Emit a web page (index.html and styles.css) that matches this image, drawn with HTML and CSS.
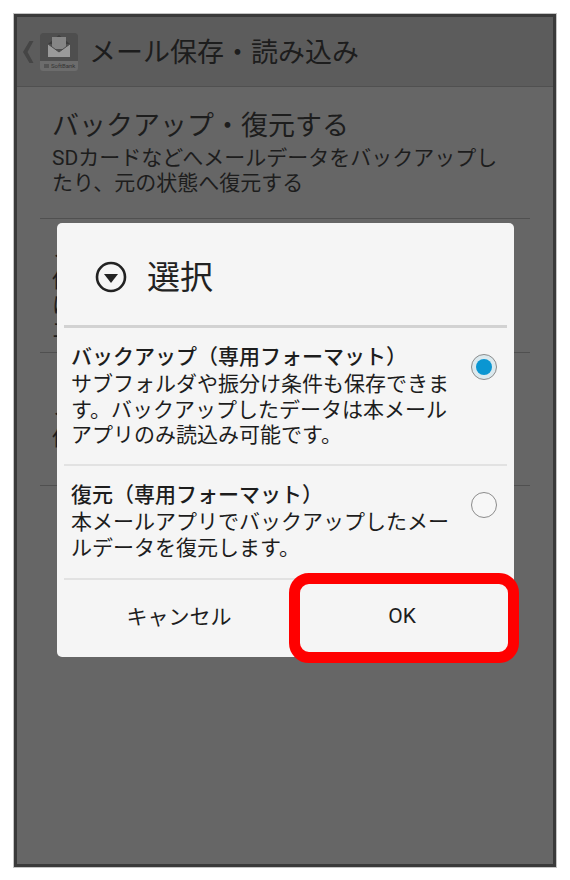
FILE: index.html
```html
<!DOCTYPE html>
<html>
<head>
<meta charset="utf-8"/>
<link rel="icon" href="data:,">
<link rel="stylesheet" href="styles.css">
<title>メール保存・読み込み</title>
</head>

<body>
<div class="phone">
  <div class="topbar">
    <span class="back"><svg width="12" height="22" viewBox="0 0 12 22"><path d="M7.5 0 H11.5 L5.5 11 L11.5 22 H7.5 L1 11 Z" fill="#454545"/></svg></span>
    <span class="appicon">
      <svg width="38" height="38" viewBox="0 0 38 38">
        <rect x="0" y="0" width="38" height="38" rx="3" fill="#6c6c6c"/>
        <path d="M0 3 Q0 0 3 0 H35 Q38 0 38 3 V28 H0 Z" fill="#4e4e4e"/>
        <path d="M8 11 L19 2 L30 11 Z" fill="#3c3c3c"/>
        <rect x="12" y="4" width="14" height="12" fill="#858585"/>
        <path d="M8 11 L19 19 L30 11 V24 H8 Z" fill="#9a9a9a"/>
        <path d="M8 11 L19 19 L30 11" fill="none" stroke="#4b4b4b" stroke-width="1"/>
        <path d="M4 32 H9 M4 34 H9" stroke="#3c3c3c" stroke-width="1"/>
      </svg>
      <span class="softbank">SoftBank</span>
    </span>
    <span class="toptitle">メール保存・読み込み</span>
  </div>

  <div class="list">
    <div class="row first">
      <div class="rowtitle">バックアップ・復元する</div>
      <div class="rowtext">SDカードなどへメールデータをバックアップしたり、元の状態へ復元する</div>
    </div>
    <div class="row second">
      <div class="rowtitle">メール保存</div>
      <div class="rowtext">保存<br>にする<br>エラー</div>
    </div>
    <div class="row third">
      <div class="rowtitle">メール読み込み</div>
      <div class="rowtext">保存する</div>
    </div>
  </div>

  <div class="dialog">
    <div class="dlghead">
      <svg class="dlgicon" width="32" height="32" viewBox="0 0 32 32">
        <circle cx="16" cy="16" r="14" fill="none" stroke="#222" stroke-width="2.6"/>
        <path d="M9 13 H23 L16 22 Z" fill="#222"/>
      </svg>
      <span class="dlgtitle">選択</span>
    </div>
    <div class="option optfirst">
      <div class="opttext">
        <div class="optname">バックアップ（専用フォーマット）</div>
        <div class="optdesc">サブフォルダや振分け条件も保存できます。バックアップしたデータは本メールアプリのみ読込み可能です。</div>
      </div>
      <span class="radio on"><span class="dot"></span></span>
    </div>
    <div class="option optsecond">
      <div class="opttext">
        <div class="optname">復元（専用フォーマット）</div>
        <div class="optdesc">本メールアプリでバックアップしたメールデータを復元します。</div>
      </div>
      <span class="radio"></span>
    </div>
    <div class="buttons">
      <div class="btn btncancel">キャンセル</div>
      <div class="btn btnok">OK</div>
    </div>
  </div>

  <div class="highlight"></div>
</div>
</body>
</html>
```

FILE: styles.css
```css
html, body {
  margin: 0;
  padding: 0;
  background-color: #ffffff;
}

body {
  width: 570px;
  height: 880px;
  overflow: hidden;
  font-family: Roboto, "Noto Sans CJK JP", sans-serif;
}

.phone {
  position: relative;
  box-sizing: border-box;
  width: 544px;
  height: 855px;
  margin: 13px 0 0 13px;
  background-color: #666666;
  border: 4px solid #3a3a3a;
  outline: 1px solid #c4c4c4;
  outline-offset: -1px;
  color: #1d1d1d;
}

.topbar {
  display: flex;
  align-items: center;
  height: 69px;
  background-color: #5c5c5c;
  border-bottom: 1px solid #505050;
}

.back {
  display: flex;
  margin-left: 5px;
  width: 16px;
}

.appicon {
  position: relative;
  display: block;
  width: 38px;
  height: 38px;
  margin-left: 2px;
}

.softbank {
  position: absolute;
  left: 11px;
  bottom: 1px;
  font-size: 6px;
  line-height: 8px;
  color: #333333;
}

.toptitle {
  margin-left: 11px;
  padding-top: 2px;
  font-size: 27px;
  line-height: 34px;
  white-space: nowrap;
}

.list {
  padding: 0 23px;
}

.row {
  box-sizing: border-box;
  display: flex;
  flex-direction: column;
  justify-content: center;
  border-bottom: 1px solid #505050;
  padding: 0 30px 0 12px;
}

.first {
  height: 132px;
  padding-bottom: 3px;
}

.second {
  height: 134px;
}

.third {
  height: 133px;
}

.rowtitle {
  font-size: 27px;
  line-height: 38px;
}

.rowtext {
  margin-top: 1px;
  font-size: 21px;
  line-height: 25px;
}

.dialog {
  position: absolute;
  left: 40px;
  top: 206px;
  width: 457px;
  height: 434px;
  box-sizing: border-box;
  padding: 0 7px;
  background-color: #f5f5f5;
  border-radius: 5px;
  display: flex;
  flex-direction: column;
}

.dlghead {
  box-sizing: border-box;
  display: flex;
  align-items: center;
  height: 105px;
  padding-top: 5px;
  flex: none;
  border-bottom: 3px solid #d2d2d2;
}

.dlgicon {
  margin-left: 31px;
}

.dlgtitle {
  margin-left: 20px;
  padding-top: 3px;
  font-size: 33px;
  line-height: 40px;
  color: #222222;
}

.option {
  display: flex;
  justify-content: space-between;
  box-sizing: border-box;
  border-bottom: 2px solid #e2e2e2;
  padding: 16px 10px 0 7px;
  flex: none;
}

.optfirst {
  height: 138px;
}

.optsecond {
  height: 114px;
}

.opttext {
  width: 380px;
}

.optname {
  font-size: 21px;
  font-weight: 500;
  line-height: 27px;
  white-space: nowrap;
}

.optdesc {
  margin-top: 1px;
  font-size: 21px;
  line-height: 25.6px;
}

.radio {
  box-sizing: border-box;
  display: flex;
  align-items: center;
  justify-content: center;
  width: 26px;
  height: 26px;
  margin-top: 10px;
  border: 1.5px solid #8c8c8c;
  border-radius: 50%;
  background-color: #f7f7f7;
}

.radio.on {
  background-color: #dbe9ee;
}

.dot {
  width: 16px;
  height: 16px;
  border-radius: 50%;
  background-color: #0a96d2;
}

.buttons {
  display: flex;
  flex: 1;
  padding-bottom: 7px;
}

.btn {
  flex: none;
  display: flex;
  align-items: center;
  justify-content: center;
  font-size: 21px;
  color: #1d1d1d;
}

.btncancel {
  width: 230px;
}

.btnok {
  width: 216px;
  padding-top: 2px;
}

.highlight {
  position: absolute;
  left: 272px;
  top: 556px;
  width: 230px;
  height: 90px;
  box-sizing: border-box;
  border: 11px solid #ff0000;
  border-radius: 20px;
}
```
